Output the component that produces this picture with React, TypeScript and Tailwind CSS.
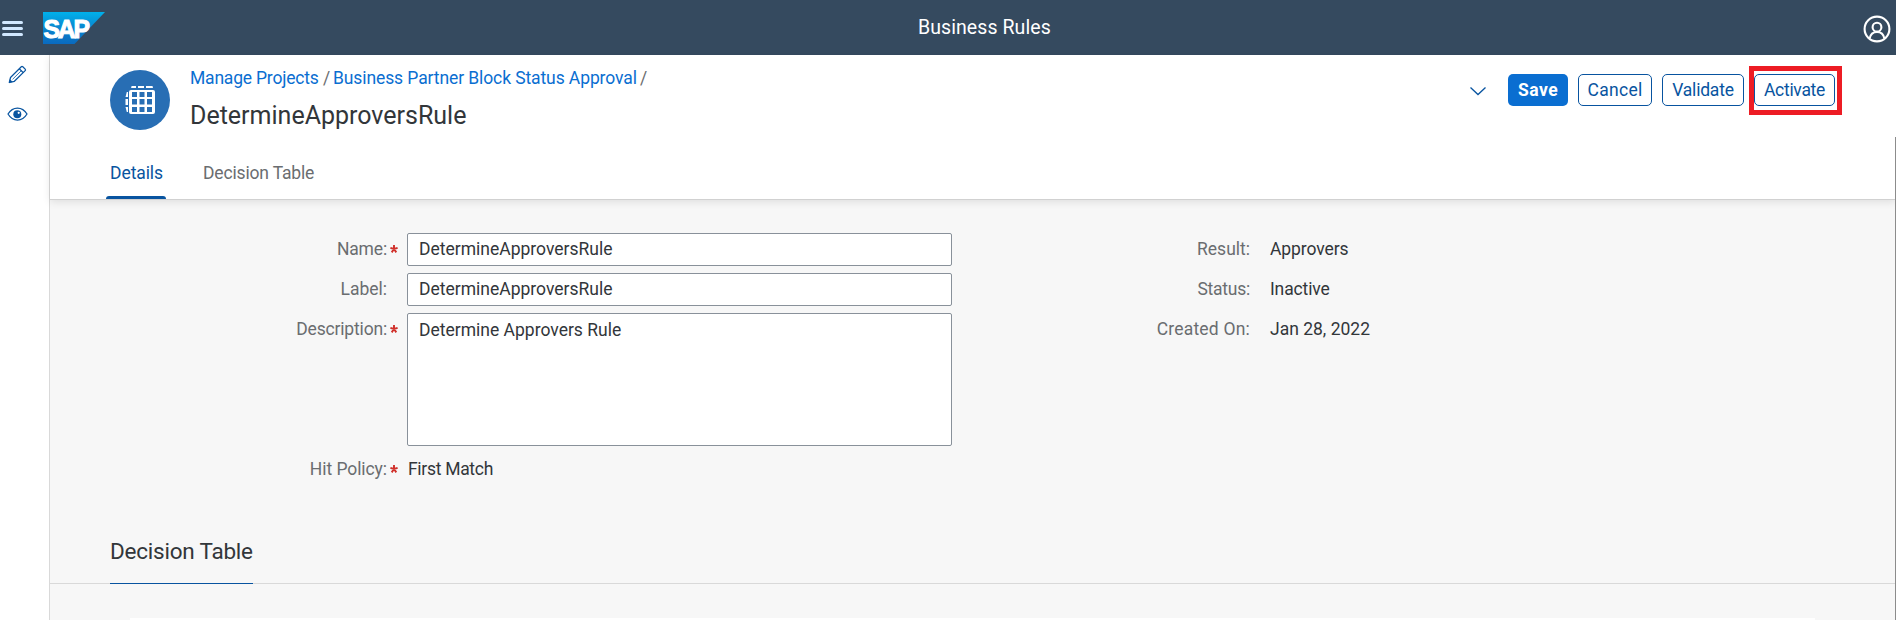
import React from "react";

function SapLogo() {
  return (
    <svg width="62" height="32" viewBox="0 0 62 32" className="shrink-0">
      <defs>
        <linearGradient id="sap" x1="0" y1="0" x2="0" y2="1">
          <stop offset="0" stopColor="#00b1eb" />
          <stop offset="0.5" stopColor="#0a86cf" />
          <stop offset="1" stopColor="#0a6abf" />
        </linearGradient>
      </defs>
      <path d="M0 0H62L31.5 32H0Z" fill="url(#sap)" />
      <text
        x="0.6"
        y="25.6"
        textLength="44"
        lengthAdjust="spacingAndGlyphs"
        fontFamily="Liberation Sans, Arial, sans-serif"
        fontWeight="700"
        fontSize="26.5"
        letterSpacing="-2.4"
        fill="#fff"
        stroke="#fff"
        strokeWidth="1.1"
      >
        SAP
      </text>
    </svg>
  );
}

function UserIcon() {
  return (
    <svg width="28" height="28" viewBox="0 0 28 28" fill="none" stroke="#fff" strokeWidth="2.1">
      <circle cx="14" cy="14" r="12.4" />
      <circle cx="14" cy="12.2" r="4.4" />
      <path d="M6.6 23.6C7.4 19.4 10 17 14 17s6.600 2.400 7.400 6.600" />
    </svg>
  );
}

function PencilIcon() {
  return (
    <svg width="19" height="19" viewBox="0 0 19 19" fill="none" stroke="#0854a0" strokeWidth="1.25" strokeLinejoin="round">
      <path d="M1.300 17.500L2.500 12.500L13.300 1.700Q14 1 14.800 1.700L17.200 4.100Q17.900 4.900 17.200 5.600L6.400 16.300Z" />
      <path d="M11.300 3.700L15.200 7.600" />
      <path d="M13.300 5.700L4.600 14.300" strokeWidth="0.8" />
      <path d="M1 18L1.900 14.200L4.900 17.100Z" fill="#0854a0" stroke="none" />
    </svg>
  );
}

function EyeIcon() {
  return (
    <svg width="21" height="14" viewBox="0 0 21 14">
      <path d="M1 7C3.400 3 6.700 1 10.500 1S17.600 3 20 7C17.600 11 14.300 13 10.500 13S3.400 11 1 7Z" fill="none" stroke="#0854a0" strokeWidth="1.25" />
      <circle cx="10.300" cy="7.300" r="4" fill="#0854a0" />
      <circle cx="11.700" cy="5.800" r="1.100" fill="#fff" />
    </svg>
  );
}

function TableIcon() {
  return (
    <svg width="60" height="60" viewBox="0 0 60 60" className="shrink-0">
      <circle cx="30" cy="30" r="30" fill="#286eb4" />
      <g fill="#fff">
        <path d="M21.600 16H26V18H21.100ZM28 16H34V18H28ZM36 16H42.500L43 18H36ZM16.800 22H18V27H15.500ZM15.500 29H18V35H15.500ZM15.500 37H18V42H16.800Z" />
        <path
          fillRule="evenodd"
          d="M21 20H43Q45 20 45 22V42Q45 44 43 44H21Q19 44 19 42V22Q19 20 21 20ZM22 22V27H27V22ZM29.500 22V27H34.500V22ZM37 22V27H42V22ZM22 29V34.500H27V29ZM29.500 29V34.500H34.500V29ZM37 29V34.500H42V29ZM22 37V42H27V37ZM29.500 37V42H34.500V37ZM37 37V42H42V37Z"
        />
      </g>
    </svg>
  );
}

function FieldLabel({ text, required, className }: { text: string; required?: boolean; className?: string }) {
  return (
    <div className="flex h-10 w-[347px] shrink-0 items-center justify-end text-[#6a6d70]">
      <span className={className}>{text}</span>
      <span className="flex w-[10px] justify-end">
        {required && (
          <svg width="8" height="8" viewBox="0 0 8 8" stroke="#d0302a" strokeWidth="1.900" className="-mr-px">
            <path d="M4 0V4M0.400 2.800L4 4L7.600 2.800M1.700 7.400L4 4L6.300 7.400" fill="none" />
          </svg>
        )}
      </span>
    </div>
  );
}

function InfoRow({ label, value, labelClass, valueClass }: { label: string; value: string; labelClass: string; valueClass: string }) {
  return (
    <div className="flex h-10 items-center">
      <div className="w-[250px] text-right text-[#6a6d70]">
        <span className={labelClass}>{label}</span>
      </div>
      <div className={`ml-5 ${valueClass}`}>{value}</div>
    </div>
  );
}

const ghost = "h-8 rounded-[5px] border border-[#0854a0] bg-white text-[#0854a0]";
const field = "mt-1 w-[545px] rounded-[2px] border border-[#89919a] bg-white px-[11px] leading-5 outline-none";

export default function App() {
  return (
    <div className="flex h-[620px] w-full flex-col overflow-hidden bg-[#f7f7f7] font-['Roboto',sans-serif] text-[17.5px] leading-5 text-[#32363a]">
      <header className="flex h-[55px] shrink-0 items-center bg-[#354a5f]">
        <div className="ml-[2px] mr-5 mt-[2px] flex w-[21px] flex-col gap-[3px]">
          <span className="h-[3px] rounded-full bg-[#d1e8ff]" />
          <span className="h-[3px] rounded-full bg-[#d1e8ff]" />
          <span className="h-[3px] rounded-full bg-[#d1e8ff]" />
        </div>
        <SapLogo />
        <h1 className="ml-[813px] text-[19.5px] tracking-[0.080px] text-white">Business Rules</h1>
        <div className="ml-auto mr-[5px] mt-[2px]">
          <UserIcon />
        </div>
      </header>

      <div className="flex min-h-0 flex-1">
        <nav className="flex w-[50px] shrink-0 flex-col items-center border-r border-[#d9d9d9] bg-white pr-[14px] pt-[10px]">
          <PencilIcon />
          <div className="mt-[23px]">
            <EyeIcon />
          </div>
        </nav>

        <main className="flex min-w-0 flex-1 flex-col">
          <section className="flex h-[145px] shrink-0 flex-col border-b border-[#d1d1d1] bg-white shadow-[0_2px_8px_rgba(0,0,0,0.10)]">
            <div className="flex h-[98px] pl-[60px] pr-[61px]">
              <div className="mt-[15px] shrink-0">
                <TableIcon />
              </div>
              <div className="ml-5 mt-[13px] whitespace-nowrap">
                <div className="flex h-5 text-[#6a6d70]">
                  <a className="w-[129px] tracking-[-0.200px] text-[#0a6ed1]">Manage Projects</a>
                  <span className="ml-[4px] w-[10px]">/</span>
                  <a className="w-[304px] tracking-[-0.100px] text-[#0a6ed1]">Business Partner Block Status Approval</a>
                  <span className="ml-[3px]">/</span>
                </div>
                <h2 className="mt-[13px] text-[25px] leading-[30px]">DetermineApproversRule</h2>
              </div>
              <div className="ml-auto mt-[19px] flex h-8 gap-[10px]">
                <svg width="18" height="32" viewBox="0 0 18 32" fill="none" stroke="#0854a0" strokeWidth="1.300" className="mr-[11px]">
                  <path d="M1.500 13.500L9 20.500L16.500 13.500" />
                </svg>
                <button className="h-8 w-[60px] rounded-[5px] bg-[#0a6ed1] font-bold tracking-[0.500px] text-white">Save</button>
                <button className={`w-[74px] tracking-[0.300px] ${ghost}`}>Cancel</button>
                <button className={`w-[82px] tracking-[-0.200px] ${ghost}`}>Validate</button>
                <div className="relative">
                  <button className={`w-[81px] tracking-[-0.300px] ${ghost}`}>Activate</button>
                  <div className="pointer-events-none absolute left-[-5px] top-[-8px] h-[49px] w-[93px] border-[5px] border-[#ed1c24]" />
                </div>
              </div>
            </div>
            <div className="flex h-[46px] pl-14">
              <div className="flex w-[60px] flex-col items-center">
                <span className="ml-px mt-[10px] tracking-[-0.100px] text-[#0854a0]">Details</span>
                <span className="mt-auto h-[3px] w-full rounded-t-[3px] bg-[#0854a0]" />
              </div>
              <span className="ml-[37px] mt-[10px] tracking-[-0.160px] text-[#6a6d70]">Decision Table</span>
            </div>
          </section>

          <section className="flex h-[336px] shrink-0 pt-[29px]">
            <div className="w-[902px]">
              <div className="flex h-10">
                <FieldLabel text="Name:" required className="tracking-[-0.150px]" />
                <input className={`ml-[10px] h-[33px] pb-[2px] ${field}`} defaultValue="DetermineApproversRule" />
              </div>
              <div className="flex h-10">
                <FieldLabel text="Label:" />
                <input className={`ml-[10px] h-[33px] pb-[2px] ${field}`} defaultValue="DetermineApproversRule" />
              </div>
              <div className="flex h-[140px]">
                <FieldLabel text="Description:" required className="tracking-[-0.180px]" />
                <textarea className={`ml-[10px] h-[133px] resize-none pt-[6px] ${field}`} defaultValue="Determine Approvers Rule" />
              </div>
              <div className="flex h-10 items-center">
                <FieldLabel text="Hit Policy:" required className="tracking-[-0.070px]" />
                <span className="ml-[11px] tracking-[-0.300px]">First Match</span>
              </div>
            </div>
            <div className="ml-[48px]">
              <InfoRow label="Result:" value="Approvers" labelClass="" valueClass="tracking-[-0.100px]" />
              <InfoRow label="Status:" value="Inactive" labelClass="tracking-[-0.250px]" valueClass="tracking-[-0.140px]" />
              <InfoRow label="Created On:" value="Jan 28, 2022" labelClass="tracking-[0.200px]" valueClass="" />
            </div>
          </section>

          <section className="flex h-[48px] shrink-0 border-b border-[#d9d9d9] pl-[60px]">
            <h3 className="z-10 -mb-px w-[143px] whitespace-nowrap border-b border-[#0854a0] text-[22.5px] leading-[30px] tracking-[-0.220px]">
              Decision Table
            </h3>
          </section>
          <div className="ml-20 mr-[81px] mt-[34px] h-[2px] shrink-0 bg-white" />
        </main>
        <div className="-ml-px mt-[82px] w-px shrink-0 bg-[#8c8c8c]" />
      </div>
    </div>
  );
}
